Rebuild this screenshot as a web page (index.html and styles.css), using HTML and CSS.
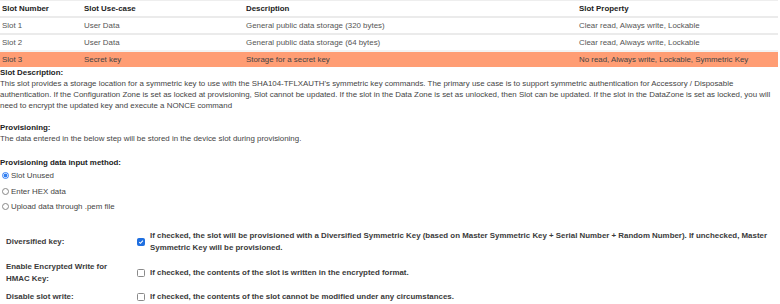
FILE: index.html
```html
<!DOCTYPE html>
<html>
<head>
<meta charset="utf-8">
<link rel="stylesheet" href="styles.css">
</head>
<body>
<div class="page">
  <table class="slots">
    <colgroup>
      <col class="c1"><col class="c2"><col class="c3"><col class="c4">
    </colgroup>
    <thead>
      <tr><th>Slot Number</th><th>Slot Use-case</th><th>Description</th><th>Slot Property</th></tr>
    </thead>
    <tbody>
      <tr><td>Slot 1</td><td>User Data</td><td>General public data storage (320 bytes)</td><td>Clear read, Always write, Lockable</td></tr>
      <tr><td>Slot 2</td><td>User Data</td><td>General public data storage (64 bytes)</td><td>Clear read, Always write, Lockable</td></tr>
      <tr class="sel"><td>Slot 3</td><td>Secret key</td><td>Storage for a secret key</td><td>No read, Always write, Lockable, Symmetric Key</td></tr>
    </tbody>
  </table>

  <div class="title">Slot Description:</div>
  <p class="text">This slot provides a storage location for a symmetric key to use with the SHA104-TFLXAUTH's symmetric key commands. The primary use case is to support symmetric authentication for Accessory / Disposable authentication. If the Configuration Zone is set as locked at provisioning, Slot cannot be updated. If the slot in the Data Zone is set as unlocked, then Slot can be updated. If the slot in the DataZone is set as locked, you will need to encrypt the updated key and execute a NONCE command</p>

  <div class="title gap">Provisioning:</div>
  <p class="text">The data entered in the below step will be stored in the device slot during provisioning.</p>

  <div class="title gap2">Provisioning data input method:</div>
  <div class="radios">
    <label class="radio"><span class="dot on"></span>Slot Unused</label>
    <label class="radio"><span class="dot"></span>Enter HEX data</label>
    <label class="radio"><span class="dot"></span>Upload data through .pem file</label>
  </div>

  <div class="form">
    <div class="row">
      <div class="lbl">Diversified key:</div>
      <div class="box on"><svg width="8" height="8" viewBox="0 0 8 8"><path d="M1.6 4.2 L3.3 5.8 L6.5 2.2" fill="none" stroke="#fff" stroke-width="1.4"/></svg></div>
      <div class="desc">If checked, the slot will be provisioned with a Diversified Symmetric Key (based on Master Symmetric Key + Serial Number + Random Number). If unchecked, Master Symmetric Key will be provisioned.</div>
    </div>
    <div class="row">
      <div class="lbl">Enable Encrypted Write for HMAC Key:</div>
      <div class="box"></div>
      <div class="desc">If checked, the contents of the slot is written in the encrypted format.</div>
    </div>
    <div class="row">
      <div class="lbl">Disable slot write:</div>
      <div class="box"></div>
      <div class="desc">If checked, the contents of the slot cannot be modified under any circumstances.</div>
    </div>
  </div>
</div>
</body>
</html>
```

FILE: styles.css
```css
html, body {
  margin: 0;
  padding: 0;
  background: #fff;
}
body {
  font-family: "Liberation Sans", Arial, sans-serif;
  font-size: 7.9px;
  color: #333;
}
.page {
  width: 780px;
}
.slots {
  width: 778px;
  border-collapse: collapse;
  table-layout: fixed;
  border-top: 1px solid #eeeeee;
}
.c1 { width: 82px; }
.c2 { width: 162px; }
.c3 { width: 333px; }
.c4 { width: auto; }
.slots th, .slots td {
  text-align: left;
  padding: 0 2px;
  height: 15px;
  line-height: 15px;
  white-space: nowrap;
}
.slots th {
  font-weight: bold;
  color: #222;
}
.slots td {
  color: #555;
}
.slots tbody tr {
  border-top: 2px solid #ebebeb;
}
.slots tbody tr.sel {
  background: #ff9d74;
  border-top-color: #f3f3f3;
}
.slots tr.sel td {
  color: #444;
}
.title {
  font-weight: bold;
  color: #222;
  line-height: 11px;
}
.title.gap { margin-top: 11px; }
.title.gap2 { margin-top: 13px; }
.text {
  margin: 0;
  line-height: 11px;
  padding-right: 4px;
  color: #444;
}
.radios {
  display: flex;
  flex-direction: column;
}
.radio {
  display: flex;
  align-items: center;
  gap: 2px;
  height: 15.5px;
  padding-left: 2px;
  color: #444;
}
.dot {
  width: 7px;
  height: 7px;
  border: 1px solid #888;
  border-radius: 50%;
  box-sizing: border-box;
  background: #fff;
}
.dot.on {
  border-color: #3b82f6;
  background: radial-gradient(circle, #2f7ef0 0 1.7px, #fff 2.2px 2.4px, #5a9cf5 2.8px);
}
.form {
  margin-top: 15px;
  display: flex;
  flex-direction: column;
  gap: 7px;
}
.row {
  display: grid;
  grid-template-columns: 137px 13px 1fr;
  align-items: center;
  font-weight: bold;
  line-height: 12px;
  color: #3a3a3a;
}
.row + .row + .row {
  margin-top: -1px;
}
.lbl {
  padding-left: 6px;
  padding-right: 22px;
}
.desc {
  padding-right: 12px;
}
.box {
  width: 8px;
  height: 8px;
  box-sizing: border-box;
  border: 1px solid #8a8a8a;
  border-radius: 1.5px;
  background: #fff;
  display: flex;
  align-items: center;
  justify-content: center;
}
.box.on {
  background: #1f6fe0;
  border-color: #1f6fe0;
}
.box svg { display: block; }
```
